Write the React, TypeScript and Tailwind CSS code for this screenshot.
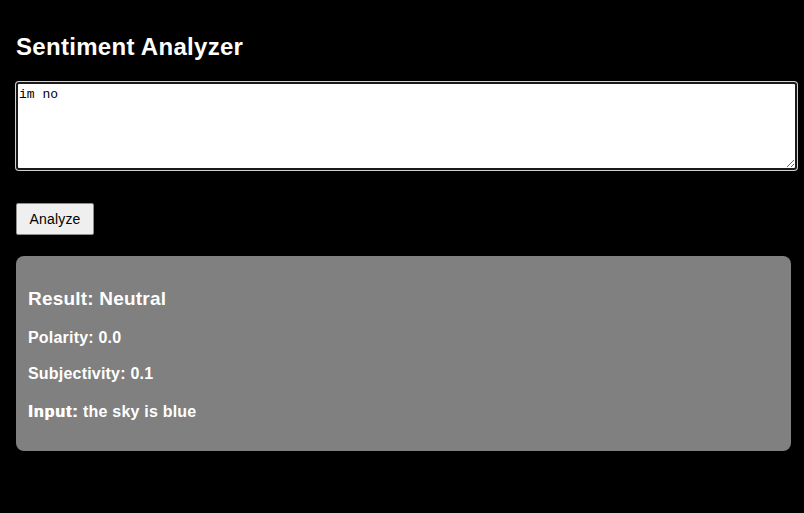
import { useState } from 'react';

interface SentimentResult {
  label: string;
  polarity: number;
  subjectivity: number;
  input: string;
}

export default function App() {
  const [text, setText] = useState('im no');
  const [result] = useState<SentimentResult>({
    label: 'Neutral',
    polarity: 0.0,
    subjectivity: 0.1,
    input: 'the sky is blue',
  });

  return (
    <div className="min-h-[513px] bg-black px-4 font-['Liberation_Sans',Arial,sans-serif] text-white">
      <h2 className="pt-[33px] text-[24px] font-bold leading-[28px] tracking-[0.3px]">Sentiment Analyzer</h2>

      {/* 입력 영역 */}
      <textarea
        value={text}
        onChange={(e) => setText(e.target.value)}
        spellCheck
        className="mt-[21px] block h-[88px] w-[781px] rounded-[3px] border-2 border-[#1a1a1a] bg-white px-[1px] py-[3px] font-['Liberation_Mono',monospace] text-[13px] leading-[15px] text-black shadow-[0_0_0_1px_#d0d0d0] outline-none"
      />

      <button className="mt-[33px] block h-8 w-[78px] rounded-[2px] border border-[#8f8f8f] bg-[#efefef] text-[14px] tracking-[0.2px] text-black">
        Analyze
      </button>

      {/* 결과 카드 */}
      <div className="mt-[21px] h-[195px] w-[775px] rounded-lg bg-[#808080] px-3 pt-[32px] tracking-[0.2px]">
        <h3 className="text-[19px] font-bold leading-[22px]">Result: {result.label}</h3>
        <p className="mt-[19px] text-[16px] font-bold leading-[18px]">Polarity: {result.polarity.toFixed(1)}</p>
        <p className="mt-[18px] text-[16px] font-bold leading-[18px]">
          Subjectivity: {result.subjectivity.toFixed(1)}
        </p>
        <p className="mt-[20px] text-[16px] font-bold leading-[18px]">
          <strong className="tracking-[1px] [text-shadow:0.7px_0_0_white]">Input:</strong> {result.input}
        </p>
      </div>
    </div>
  );
}
